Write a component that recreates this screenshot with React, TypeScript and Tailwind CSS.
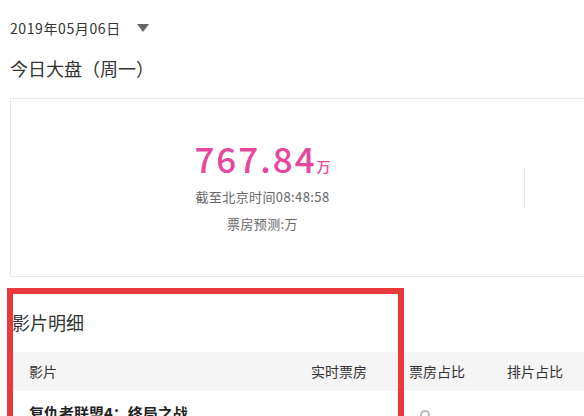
import React from "react";

const font = { fontFamily: '"Noto Sans CJK SC", "Noto Sans", sans-serif' };

export default function App() {
  return (
    <div className="relative w-[584px] h-[416px] overflow-hidden bg-white text-[#333]" style={font}>
      <div className="pl-[10px] pt-[17px]">
        {/* date picker */}
        <div className="flex items-center h-[22px] text-[14px] tracking-[0.6px] text-[#333]">
          <span>2019年05月06日</span>
          <span className="ml-[16px] w-0 h-0 border-l-[6px] border-r-[6px] border-t-[8px] border-l-transparent border-r-transparent border-t-[#666]" />
        </div>

        <h1 className="mt-[16px] h-[26px] leading-[26px] text-[18px] text-[#333]">今日大盘（周一）</h1>

        {/* summary card */}
        <div className="mt-[17px] w-[700px] h-[179px] border border-[#e8e8e8] flex">
          <div className="w-[503px] flex flex-col items-center pt-[41px]">
            <div className="flex items-end text-[#e8479e] leading-none">
              <span className="text-[35px] font-medium tracking-[2px]">767.84</span>
              <span className="text-[14px] font-medium mb-[2px]">万</span>
            </div>
            <div className="mt-[12px] text-[13px] leading-[19px] tracking-[0.4px] text-[#666]">截至北京时间08:48:58</div>
            <div className="mt-[8px] text-[13px] leading-[19px] tracking-[0.4px] text-[#666]">票房预测:万</div>
          </div>
          <div className="ml-[10px] self-center w-px h-[40px] bg-[#e5e5e5]" />
        </div>

        {/* film detail */}
        <h2 className="mt-[32px] ml-[2px] h-[26px] leading-[26px] text-[18px] text-[#333]">影片明细</h2>
        <div className="mt-[17px] ml-[3px] w-[600px] h-[39px] bg-[#f5f5f5] flex items-center text-[14px] text-[#333]">
          <span className="ml-[16px] w-[282px]">影片</span>
          <span className="w-[98px]">实时票房</span>
          <span className="w-[98px]">票房占比</span>
          <span>排片占比</span>
        </div>
        <div className="ml-[3px] w-[600px] flex items-start pt-[11px]">
          <span className="ml-[16px] w-[391px] text-[15px] leading-[22px] font-bold text-[#222]">复仇者联盟4：终局之战</span>
          <span className="mt-[8px] w-[10px] h-[10px] rounded-full border-2 border-[#bbb]" />
        </div>
      </div>

      {/* annotation frame */}
      <div className="absolute left-[7px] top-[288px] w-[397px] h-[140px] border-[6px] border-[#e83a3a]" />
    </div>
  );
}
